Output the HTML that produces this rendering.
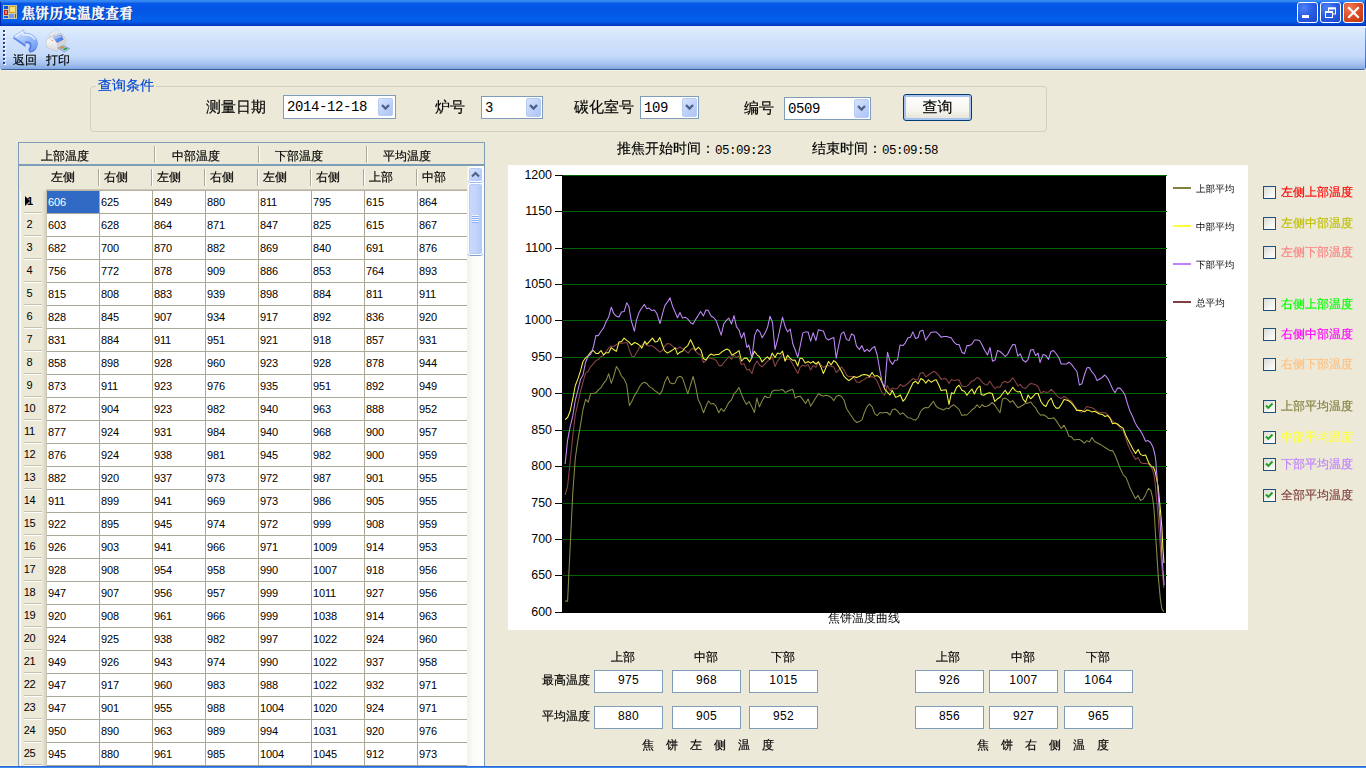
<!DOCTYPE html>
<html lang="zh-CN"><head><meta charset="utf-8"><title>焦饼历史温度查看</title>
<style>
*{box-sizing:border-box;margin:0;padding:0}
html,body{width:1366px;height:768px;overflow:hidden;background:#ece9d8}
body{position:relative;font:12px "Liberation Sans","WenQuanYi Zen Hei","Noto Sans CJK SC",sans-serif;color:#000}
.abs{position:absolute}
/* title bar */
#title{position:absolute;left:0;top:0;width:1366px;height:26px;
 background:linear-gradient(to bottom,#3a8bf5 0,#2f7ff0 2px,#0a5be6 3px,#0358e9 5px,#0455e4 9px,#0358e6 14px,#0560ee 19px,#0458e8 22px,#0347d2 24px,#0034b5 26px)}
#title .edge{position:absolute;left:0;top:2px;width:1px;height:24px;background:#0028a8}
#title .ttxt{position:absolute;left:21.5px;top:2px;height:18px;line-height:18px;color:#fff;white-space:nowrap;
 font:bold 13.5px "Liberation Serif","Noto Serif CJK SC",serif;text-shadow:1px 1px 0 #0a1f7a;letter-spacing:0.45px;-webkit-text-stroke:0.35px #fff}
.cap{position:absolute;top:2px;width:21px;height:21px;border:1px solid #fff;border-radius:3px;
 background:radial-gradient(circle at 30% 25%,#4f83f3 0,#2b5fe6 45%,#1a44c8 100%)}
.cap.close{background:radial-gradient(circle at 30% 25%,#ee7a55 0,#dd4c22 50%,#b8330f 100%)}
/* toolstrip */
#tool{position:absolute;left:0;top:26px;width:1366px;height:45px;background:#ece9d8}
#tool::after{content:"";position:absolute;left:3px;top:44px;width:1362px;height:1px;background:#f6f2e4}
#tool .bar{position:absolute;left:0;top:0;width:1366px;height:44px;border-radius:0 0 3px 3px;
 background:linear-gradient(to bottom,#e3eefd 0,#d4e5fc 10px,#c9defb 24px,#c4dafa 30px,#a9c6f0 37px,#86abe2 42.5px,#5e86c8 43px,#3b619c 43.2px,#3b619c 44px);}
#tool .grip{position:absolute;left:3px;top:4px;width:2px;height:36px;
 background:repeating-linear-gradient(to bottom,#27418a 0,#27418a 2px,transparent 2px,transparent 4px)}
#tool .grip2{position:absolute;left:4px;top:5px;width:2px;height:36px;
 background:repeating-linear-gradient(to bottom,#fff 0,#fff 2px,transparent 2px,transparent 4px)}
.tbtxt{position:absolute;top:27px;font-size:12px;line-height:14px;white-space:nowrap}
/* group box */
#gb{position:absolute;left:90px;top:86px;width:957px;height:46px;border:1px solid #d0d0bf;border-radius:4px}
#gbt{position:absolute;left:96px;top:76px;padding:0 2px;background:#ece9d8;color:#0046d5;font-size:14px;line-height:18px;white-space:nowrap}
.lbl15{position:absolute;font-size:15px;line-height:18px;white-space:nowrap}
.combo{position:absolute;height:23px;border:1px solid #7f9db9;background:#fff}
.combo span{position:absolute;left:3px;top:3px;font:14px/17px "Liberation Mono",monospace;letter-spacing:-0.4px;white-space:nowrap}
.combo .dd{position:absolute;right:1px;top:1px;width:15px;height:19px;border:1px solid #b7cbf5;border-radius:2px;
 background:linear-gradient(135deg,#d6e3fc 0,#c1d3fb 50%,#aec4f7 100%)}
.combo .dd svg{position:absolute;left:2px;top:5px}
.combo.dp{height:24px}
.combo.dp .dd{right:2px;top:2px;height:18px}
#qbtn{position:absolute;left:903px;top:94px;width:69px;height:27px;border:1px solid #003c74;border-radius:3px;
 background:linear-gradient(to bottom,#fff 0,#f6f5ef 60%,#e4e2d5 100%);box-shadow:inset 0 0 0 2px #a9c3ef}
#qbtn span{position:absolute;left:0;width:100%;top:3px;text-align:center;font-size:15px;line-height:18px}
.tm{position:absolute;top:140px;font-size:14px;line-height:16px;white-space:nowrap}
.tm b{font:12.5px "Liberation Mono",monospace;letter-spacing:-0.5px;position:relative;top:0.5px}
/* grid */
#grid{position:absolute;left:18px;top:142px;width:467px;height:626px;border:1px solid #7f9db9;border-bottom:0;overflow:hidden;background:#ece9d8}
.gh1{position:absolute;top:0;height:21px}
.gh1 span{position:absolute;top:6px;font-size:12px;line-height:14px;white-space:nowrap}
.gh1:not(.last)::after{content:"";position:absolute;right:-1px;top:3px;width:1px;height:17px;background:#aca899;box-shadow:1px 0 0 #fff}
.gsep{position:absolute;left:0;top:21px;width:465px;height:2px;background:#7f9db9}
.gh2row{position:absolute;left:0;top:23px;width:449px;height:25px}
.gh2row::after{content:"";position:absolute;left:27px;top:23px;width:421px;height:2px;background:linear-gradient(to bottom,#d5d1c1,#aca899)}
.gh2{position:absolute;top:0;height:23px}
.gh2 span{position:absolute;left:4px;top:4px;font-size:12px;line-height:14px;white-space:nowrap}
.gh2:not(:first-child):not(:last-child)::after{content:"";position:absolute;right:1px;top:3px;width:1px;height:17px;background:#aca899;box-shadow:1px 0 0 #fff}
.gbody{position:absolute;left:0;top:48px;width:448px;height:580px;background:#fff;overflow:hidden}
.gr{position:absolute;left:0;width:449px;height:23px}
.rh{position:absolute;left:0;top:0;width:28px;height:23px;background:linear-gradient(to right,#ece9d8 0,#ece9d8 1px,#fff 1px,#fff 2px,#ece9d8 2px,#ece9d8 23px,#d6d2c2 27px,#bdb9a9 28px);font-size:11px;line-height:22px;padding-left:0;width:28px;letter-spacing:-0.3px}
.rh b{position:absolute;left:0;top:-1px;width:21px;text-align:center;font-weight:normal}
.rh::after{content:"";position:absolute;left:5px;top:22px;width:18px;height:1px;background:#fff;box-shadow:0 -1px 0 #c5c2b2}
.c{position:absolute;top:0;width:53px;height:23px;border-right:1px solid #aca899;border-bottom:1px solid #aca899;font-size:11px;line-height:23px;padding-left:1px;letter-spacing:-0.15px;white-space:nowrap;overflow:hidden}
.c.sel{background:#316ac5;color:#fff}
.cur{position:absolute;left:6px;top:5px;width:0;height:0;border-left:5px solid #000;border-top:5px solid transparent;border-bottom:5px solid transparent}
.cur1{position:absolute;left:8px;top:-1px;font-size:11px;line-height:22px;font-style:normal;font-weight:bold}
/* chart */
#chart{position:absolute;left:508px;top:165px;width:740px;height:465px;background:#fff}
/* checkboxes */
.cb{position:absolute;left:1263px;width:13px;height:13px;border:1px solid #1c5180;background:linear-gradient(135deg,#dcdcd7 0,#f3f3ef 60%,#fff 100%)}
.cb svg{position:absolute;left:1px;top:1px}
.cbl{position:absolute;left:1281px;font-size:12px;line-height:14px;white-space:nowrap}
/* bottom */
.l12{position:absolute;font-size:12px;line-height:14px;white-space:nowrap}
.tb{position:absolute;width:69px;height:23px;border:1px solid #7f9db9;background:#fff;text-align:center;font-size:12px;line-height:19px;letter-spacing:0.4px}
#botline{position:absolute;left:0;top:766px;width:1366px;height:2px;background:linear-gradient(to bottom,#2a62c4 0,#2e6fd8 1px,#3c8df0 1px,#3c8df0 2px)}
#botcream{position:absolute;left:0;top:765px;width:1366px;height:1px;background:#f6f2de}

.gh1 span,.gh2 span,.lbl15,#gbt,.cbl,.l12,.tbtxt,.tm,#qbtn span{-webkit-text-stroke:0.16px currentColor}
.tm b{-webkit-text-stroke:0}
#tool .redge{position:absolute;left:1365px;top:2px;width:1px;height:40px;background:linear-gradient(to bottom,#7fa6ea,#3f69b8)}
#title .redge{position:absolute;left:1365px;top:0;width:1px;height:26px;background:#0030a8}

</style></head><body>

<div id="botcream"></div>
<div id="title">
 <div class="edge"></div><div class="redge"></div>
 <svg class="abs" style="left:3px;top:5px" width="15" height="15" viewBox="0 0 15 15">
  <rect x="0.5" y="0.5" width="13" height="13" fill="#0f5ae0" stroke="#cfc6a6"/>
  <path d="M5.5 1v12M1 4.5h4.5M1 10.5h4.5M5.5 8.5h8M11.5 8.5v5" stroke="#cfc6a6" stroke-width="1" fill="none"/>
  <rect x="1" y="1" width="4" height="3" fill="#0c50d8"/>
  <rect x="1" y="5" width="4" height="5" fill="#c8210f"/><rect x="2" y="6" width="2" height="3" fill="#f08a7a"/>
  <rect x="6" y="1" width="7" height="7" fill="#d9a21b"/><rect x="7" y="2" width="5" height="5" fill="#ffe27a"/>
  <rect x="6" y="9" width="5" height="4" fill="#6f9cf0"/>
  <rect x="1" y="11" width="2" height="2" fill="#1a5ae8"/><rect x="4" y="11" width="1" height="2" fill="#1a5ae8"/><rect x="12" y="9" width="1" height="4" fill="#1a5ae8"/>
 </svg>
 <div class="ttxt">焦饼历史温度查看</div>
 <div class="cap" style="left:1297px"><svg width="19" height="19"><rect x="4" y="12" width="7" height="3" fill="#fff"/></svg></div>
 <div class="cap" style="left:1320px"><svg width="19" height="19" fill="none" stroke="#fff"><rect x="7.5" y="5" width="7" height="6" stroke-width="1"/><path d="M7.5 5.5h7" stroke-width="2"/><rect x="4.5" y="8.5" width="7" height="6" fill="#2b5fe6"/><path d="M4.5 9h7" stroke-width="2"/></svg></div>
 <div class="cap close" style="left:1343px"><svg width="19" height="19" stroke="#fff" stroke-width="2.2" stroke-linecap="square"><path d="M5 5l9 9M14 5l-9 9"/></svg></div>
</div>
<div id="tool">
 <div class="bar"></div><div class="redge"></div>
 <div class="grip2"></div><div class="grip"></div>
 <svg class="abs" style="left:12px;top:3px" width="28" height="25" viewBox="0 0 28 25">
  <defs>
   <linearGradient id="ug1" x1="0" y1="0" x2="0.9" y2="1"><stop offset="0" stop-color="#dbe9ff"/><stop offset="0.45" stop-color="#a9c6fb"/><stop offset="1" stop-color="#6b98f4"/></linearGradient>
   <linearGradient id="ug2" x1="0" y1="0" x2="0" y2="1"><stop offset="0" stop-color="#6a96f3"/><stop offset="1" stop-color="#3a66e2"/></linearGradient>
  </defs>
  <path d="M1.2 9.2 L11.6 2.8 L12.3 5.6 C17.5 5.4 22 7.4 24.4 11.4 C26.3 15 25 20 21.5 22.2 C20.3 23 18.8 23.4 17.6 23.2 L16.6 20.6 C18 18.6 18.6 16.4 17.4 15 C16.4 14 14.8 13.8 13.2 14 L13.2 17.6 Z" fill="url(#ug2)" stroke="#5d84e6" stroke-width="0.5"/>
  <path d="M1.2 7.5 L11.6 1 L12.3 4.2 C17.5 4 22 6 24.4 10 C26.3 13.6 25 18.6 21.5 20.8 C20.3 21.6 18.8 22 17.6 21.8 C19.6 19.4 20.6 15.4 18.4 13.2 C17 12 15 12 13.2 12.3 L13.2 15.6 Z" fill="url(#ug1)" stroke="#7fa3f2" stroke-width="0.6"/>
  <path d="M3.4 7.6 L10.6 3 L11.2 5.8 C16.4 5.2 21 7 23 10.6" fill="none" stroke="#f2f7ff" stroke-width="1.5" opacity="0.85"/>
 </svg>
 <svg class="abs" style="left:45px;top:2px" width="28" height="26" viewBox="0 0 28 26">
  <defs>
   <linearGradient id="pb" x1="0" y1="0" x2="1" y2="1"><stop offset="0" stop-color="#a9c4f6"/><stop offset="0.5" stop-color="#5f8ce8"/><stop offset="1" stop-color="#3c6ad8"/></linearGradient>
   <linearGradient id="pf" x1="0" y1="0" x2="0" y2="1"><stop offset="0" stop-color="#fafafa"/><stop offset="1" stop-color="#d9d9d9"/></linearGradient>
  </defs>
  <path d="M4.2 6 L11.3 1.4 L13 2.2 L12.9 8.6 L5.2 12 Z" fill="#edf2fb" stroke="#c3cbdb" stroke-width="0.7"/>
  <path d="M5.4 6.4 L11.4 2.6 L11.6 8 L6 10.6 Z" fill="#dfe8f8"/>
  <path d="M1.1 14.6 L2.5 10.3 L7.7 7.7 L16.8 5.4 L20.6 11.2 L20.8 17 L11.7 23.2 L1.9 19.2 Z" fill="#e9e9e9" stroke="#b9b9b9" stroke-width="0.7"/>
  <path d="M2.5 11 L11.9 15 L11.7 23 L2 19 L1.4 14.6 Z" fill="url(#pf)"/>
  <path d="M12 15 L20.5 11.3 L20.6 17 L11.8 23 Z" fill="#d4d4d4"/>
  <path d="M7.7 8.9 L16.3 6.6 L18.8 11.5 L12 14.9 Z" fill="url(#pb)"/>
  <path d="M8.8 9.3 L15.8 7.4 L16.6 9 L9.8 11.2 Z" fill="#b4ccf8" opacity="0.8"/>
  <path d="M12.8 20 L18 17.6 L24.6 20.6 L19.4 23.8 Z" fill="#a9c3ef" stroke="#7f97c6" stroke-width="0.7"/>
  <path d="M14.6 19.8 L17.8 18.4 L19.8 19.3 L16.6 20.9 Z" fill="#e38a1a"/>
  <path d="M17.6 21.2 L21 19.6 L22.8 20.4 L19.6 22.3 Z" fill="#27a837"/>
  <circle cx="7.2" cy="12.6" r="0.5" fill="#e05555"/>
 </svg>
 <div class="tbtxt" style="left:13px">返回</div>
 <div class="tbtxt" style="left:46px">打印</div>
</div>
<div id="gb"></div><div id="gbt">查询条件</div>
<div class="lbl15" style="left:206px;top:98px">测量日期</div>
<div class="combo dp" style="left:283px;top:95px;width:113px"><span>2014-12-18</span><div class="dd"><svg width="9" height="7" viewBox="0 0 9 7"><path d="M1 1l3.5 3.5l3.5-3.5" fill="none" stroke="#4d6185" stroke-width="2.3"/></svg></div></div>
<div class="lbl15" style="left:435px;top:98px">炉号</div>
<div class="combo" style="left:481px;top:96px;width:62px"><span>3</span><div class="dd"><svg width="9" height="7" viewBox="0 0 9 7"><path d="M1 1l3.5 3.5l3.5-3.5" fill="none" stroke="#4d6185" stroke-width="2.3"/></svg></div></div>
<div class="lbl15" style="left:574px;top:98px">碳化室号</div>
<div class="combo" style="left:640px;top:96px;width:59px"><span>109</span><div class="dd"><svg width="9" height="7" viewBox="0 0 9 7"><path d="M1 1l3.5 3.5l3.5-3.5" fill="none" stroke="#4d6185" stroke-width="2.3"/></svg></div></div>
<div class="lbl15" style="left:744px;top:99px">编号</div>
<div class="combo" style="left:784px;top:97px;width:87px"><span>0509</span><div class="dd"><svg width="9" height="7" viewBox="0 0 9 7"><path d="M1 1l3.5 3.5l3.5-3.5" fill="none" stroke="#4d6185" stroke-width="2.3"/></svg></div></div>
<div id="qbtn"><span>查询</span></div>
<div class="tm" style="left:617px">推焦开始时间：<b>05:09:23</b></div>
<div class="tm" style="left:812px">结束时间：<b>05:09:58</b></div>

<div id="grid">
<div class="gh1" style="left:1px;width:134px"><span style="left:21px">上部温度</span></div>
<div class="gh1" style="left:136px;width:103px"><span style="left:17px">中部温度</span></div>
<div class="gh1" style="left:240px;width:107px"><span style="left:16px">下部温度</span></div>
<div class="gh1 last" style="left:348px;width:117px"><span style="left:16px">平均温度</span></div>
<div class="gsep"></div>
<div class="gh2row">
<div class="gh2" style="left:0;width:27px"></div>
<div class="gh2" style="left:28px;width:53px"><span>左侧</span></div>
<div class="gh2" style="left:81px;width:53px"><span>右侧</span></div>
<div class="gh2" style="left:134px;width:53px"><span>左侧</span></div>
<div class="gh2" style="left:187px;width:53px"><span>右侧</span></div>
<div class="gh2" style="left:240px;width:53px"><span>左侧</span></div>
<div class="gh2" style="left:293px;width:53px"><span>右侧</span></div>
<div class="gh2" style="left:346px;width:53px"><span>上部</span></div>
<div class="gh2" style="left:399px;width:50px"><span>中部</span></div>
</div>
<div class="gbody">
<div class="gr" style="top:0px">
<div class="rh"><i class="cur"></i><i class="cur1">1</i></div>
<div class="c sel" style="left:28px">606</div>
<div class="c" style="left:81px">625</div>
<div class="c" style="left:134px">849</div>
<div class="c" style="left:187px">880</div>
<div class="c" style="left:240px">811</div>
<div class="c" style="left:293px">795</div>
<div class="c" style="left:346px">615</div>
<div class="c" style="left:399px">864</div>
</div>
<div class="gr" style="top:23px">
<div class="rh"><b>2</b></div>
<div class="c" style="left:28px">603</div>
<div class="c" style="left:81px">628</div>
<div class="c" style="left:134px">864</div>
<div class="c" style="left:187px">871</div>
<div class="c" style="left:240px">847</div>
<div class="c" style="left:293px">825</div>
<div class="c" style="left:346px">615</div>
<div class="c" style="left:399px">867</div>
</div>
<div class="gr" style="top:46px">
<div class="rh"><b>3</b></div>
<div class="c" style="left:28px">682</div>
<div class="c" style="left:81px">700</div>
<div class="c" style="left:134px">870</div>
<div class="c" style="left:187px">882</div>
<div class="c" style="left:240px">869</div>
<div class="c" style="left:293px">840</div>
<div class="c" style="left:346px">691</div>
<div class="c" style="left:399px">876</div>
</div>
<div class="gr" style="top:69px">
<div class="rh"><b>4</b></div>
<div class="c" style="left:28px">756</div>
<div class="c" style="left:81px">772</div>
<div class="c" style="left:134px">878</div>
<div class="c" style="left:187px">909</div>
<div class="c" style="left:240px">886</div>
<div class="c" style="left:293px">853</div>
<div class="c" style="left:346px">764</div>
<div class="c" style="left:399px">893</div>
</div>
<div class="gr" style="top:92px">
<div class="rh"><b>5</b></div>
<div class="c" style="left:28px">815</div>
<div class="c" style="left:81px">808</div>
<div class="c" style="left:134px">883</div>
<div class="c" style="left:187px">939</div>
<div class="c" style="left:240px">898</div>
<div class="c" style="left:293px">884</div>
<div class="c" style="left:346px">811</div>
<div class="c" style="left:399px">911</div>
</div>
<div class="gr" style="top:115px">
<div class="rh"><b>6</b></div>
<div class="c" style="left:28px">828</div>
<div class="c" style="left:81px">845</div>
<div class="c" style="left:134px">907</div>
<div class="c" style="left:187px">934</div>
<div class="c" style="left:240px">917</div>
<div class="c" style="left:293px">892</div>
<div class="c" style="left:346px">836</div>
<div class="c" style="left:399px">920</div>
</div>
<div class="gr" style="top:138px">
<div class="rh"><b>7</b></div>
<div class="c" style="left:28px">831</div>
<div class="c" style="left:81px">884</div>
<div class="c" style="left:134px">911</div>
<div class="c" style="left:187px">951</div>
<div class="c" style="left:240px">921</div>
<div class="c" style="left:293px">918</div>
<div class="c" style="left:346px">857</div>
<div class="c" style="left:399px">931</div>
</div>
<div class="gr" style="top:161px">
<div class="rh"><b>8</b></div>
<div class="c" style="left:28px">858</div>
<div class="c" style="left:81px">898</div>
<div class="c" style="left:134px">928</div>
<div class="c" style="left:187px">960</div>
<div class="c" style="left:240px">923</div>
<div class="c" style="left:293px">928</div>
<div class="c" style="left:346px">878</div>
<div class="c" style="left:399px">944</div>
</div>
<div class="gr" style="top:184px">
<div class="rh"><b>9</b></div>
<div class="c" style="left:28px">873</div>
<div class="c" style="left:81px">911</div>
<div class="c" style="left:134px">923</div>
<div class="c" style="left:187px">976</div>
<div class="c" style="left:240px">935</div>
<div class="c" style="left:293px">951</div>
<div class="c" style="left:346px">892</div>
<div class="c" style="left:399px">949</div>
</div>
<div class="gr" style="top:207px">
<div class="rh"><b>10</b></div>
<div class="c" style="left:28px">872</div>
<div class="c" style="left:81px">904</div>
<div class="c" style="left:134px">923</div>
<div class="c" style="left:187px">982</div>
<div class="c" style="left:240px">940</div>
<div class="c" style="left:293px">963</div>
<div class="c" style="left:346px">888</div>
<div class="c" style="left:399px">952</div>
</div>
<div class="gr" style="top:230px">
<div class="rh"><b>11</b></div>
<div class="c" style="left:28px">877</div>
<div class="c" style="left:81px">924</div>
<div class="c" style="left:134px">931</div>
<div class="c" style="left:187px">984</div>
<div class="c" style="left:240px">940</div>
<div class="c" style="left:293px">968</div>
<div class="c" style="left:346px">900</div>
<div class="c" style="left:399px">957</div>
</div>
<div class="gr" style="top:253px">
<div class="rh"><b>12</b></div>
<div class="c" style="left:28px">876</div>
<div class="c" style="left:81px">924</div>
<div class="c" style="left:134px">938</div>
<div class="c" style="left:187px">981</div>
<div class="c" style="left:240px">945</div>
<div class="c" style="left:293px">982</div>
<div class="c" style="left:346px">900</div>
<div class="c" style="left:399px">959</div>
</div>
<div class="gr" style="top:276px">
<div class="rh"><b>13</b></div>
<div class="c" style="left:28px">882</div>
<div class="c" style="left:81px">920</div>
<div class="c" style="left:134px">937</div>
<div class="c" style="left:187px">973</div>
<div class="c" style="left:240px">972</div>
<div class="c" style="left:293px">987</div>
<div class="c" style="left:346px">901</div>
<div class="c" style="left:399px">955</div>
</div>
<div class="gr" style="top:299px">
<div class="rh"><b>14</b></div>
<div class="c" style="left:28px">911</div>
<div class="c" style="left:81px">899</div>
<div class="c" style="left:134px">941</div>
<div class="c" style="left:187px">969</div>
<div class="c" style="left:240px">973</div>
<div class="c" style="left:293px">986</div>
<div class="c" style="left:346px">905</div>
<div class="c" style="left:399px">955</div>
</div>
<div class="gr" style="top:322px">
<div class="rh"><b>15</b></div>
<div class="c" style="left:28px">922</div>
<div class="c" style="left:81px">895</div>
<div class="c" style="left:134px">945</div>
<div class="c" style="left:187px">974</div>
<div class="c" style="left:240px">972</div>
<div class="c" style="left:293px">999</div>
<div class="c" style="left:346px">908</div>
<div class="c" style="left:399px">959</div>
</div>
<div class="gr" style="top:345px">
<div class="rh"><b>16</b></div>
<div class="c" style="left:28px">926</div>
<div class="c" style="left:81px">903</div>
<div class="c" style="left:134px">941</div>
<div class="c" style="left:187px">966</div>
<div class="c" style="left:240px">971</div>
<div class="c" style="left:293px">1009</div>
<div class="c" style="left:346px">914</div>
<div class="c" style="left:399px">953</div>
</div>
<div class="gr" style="top:368px">
<div class="rh"><b>17</b></div>
<div class="c" style="left:28px">928</div>
<div class="c" style="left:81px">908</div>
<div class="c" style="left:134px">954</div>
<div class="c" style="left:187px">958</div>
<div class="c" style="left:240px">990</div>
<div class="c" style="left:293px">1007</div>
<div class="c" style="left:346px">918</div>
<div class="c" style="left:399px">956</div>
</div>
<div class="gr" style="top:391px">
<div class="rh"><b>18</b></div>
<div class="c" style="left:28px">947</div>
<div class="c" style="left:81px">907</div>
<div class="c" style="left:134px">956</div>
<div class="c" style="left:187px">957</div>
<div class="c" style="left:240px">999</div>
<div class="c" style="left:293px">1011</div>
<div class="c" style="left:346px">927</div>
<div class="c" style="left:399px">956</div>
</div>
<div class="gr" style="top:414px">
<div class="rh"><b>19</b></div>
<div class="c" style="left:28px">920</div>
<div class="c" style="left:81px">908</div>
<div class="c" style="left:134px">961</div>
<div class="c" style="left:187px">966</div>
<div class="c" style="left:240px">999</div>
<div class="c" style="left:293px">1038</div>
<div class="c" style="left:346px">914</div>
<div class="c" style="left:399px">963</div>
</div>
<div class="gr" style="top:437px">
<div class="rh"><b>20</b></div>
<div class="c" style="left:28px">924</div>
<div class="c" style="left:81px">925</div>
<div class="c" style="left:134px">938</div>
<div class="c" style="left:187px">982</div>
<div class="c" style="left:240px">997</div>
<div class="c" style="left:293px">1022</div>
<div class="c" style="left:346px">924</div>
<div class="c" style="left:399px">960</div>
</div>
<div class="gr" style="top:460px">
<div class="rh"><b>21</b></div>
<div class="c" style="left:28px">949</div>
<div class="c" style="left:81px">926</div>
<div class="c" style="left:134px">943</div>
<div class="c" style="left:187px">974</div>
<div class="c" style="left:240px">990</div>
<div class="c" style="left:293px">1022</div>
<div class="c" style="left:346px">937</div>
<div class="c" style="left:399px">958</div>
</div>
<div class="gr" style="top:483px">
<div class="rh"><b>22</b></div>
<div class="c" style="left:28px">947</div>
<div class="c" style="left:81px">917</div>
<div class="c" style="left:134px">960</div>
<div class="c" style="left:187px">983</div>
<div class="c" style="left:240px">988</div>
<div class="c" style="left:293px">1022</div>
<div class="c" style="left:346px">932</div>
<div class="c" style="left:399px">971</div>
</div>
<div class="gr" style="top:506px">
<div class="rh"><b>23</b></div>
<div class="c" style="left:28px">947</div>
<div class="c" style="left:81px">901</div>
<div class="c" style="left:134px">955</div>
<div class="c" style="left:187px">988</div>
<div class="c" style="left:240px">1004</div>
<div class="c" style="left:293px">1020</div>
<div class="c" style="left:346px">924</div>
<div class="c" style="left:399px">971</div>
</div>
<div class="gr" style="top:529px">
<div class="rh"><b>24</b></div>
<div class="c" style="left:28px">950</div>
<div class="c" style="left:81px">890</div>
<div class="c" style="left:134px">963</div>
<div class="c" style="left:187px">989</div>
<div class="c" style="left:240px">994</div>
<div class="c" style="left:293px">1031</div>
<div class="c" style="left:346px">920</div>
<div class="c" style="left:399px">976</div>
</div>
<div class="gr" style="top:552px">
<div class="rh"><b>25</b></div>
<div class="c" style="left:28px">945</div>
<div class="c" style="left:81px">880</div>
<div class="c" style="left:134px">961</div>
<div class="c" style="left:187px">985</div>
<div class="c" style="left:240px">1004</div>
<div class="c" style="left:293px">1045</div>
<div class="c" style="left:346px">912</div>
<div class="c" style="left:399px">973</div>
</div>
</div>
<div id="sb" style="position:absolute;left:448px;top:23px;width:17px;height:605px;background:linear-gradient(to right,#f1f0e8 0,#fbfbf8 40%,#fefefb 100%)">
 <div style="position:absolute;left:1px;top:1px;width:15px;height:15px;border:1px solid #fff;border-radius:3px;background:linear-gradient(135deg,#dbe6fd 0,#c3d5fc 50%,#aec4f8 100%);box-shadow:inset 0 0 0 1px #b7cbf5,0 1px 0 #9db8ee">
  <svg width="13" height="13" style="position:absolute;left:0;top:0"><path d="M3 8.5l3.5-3.5l3.5 3.5" fill="none" stroke="#4d6185" stroke-width="2"/></svg></div>
 <div style="position:absolute;left:1px;top:17px;width:15px;height:72px;border:1px solid #fff;border-radius:3px;background:linear-gradient(to right,#c9d9fc 0,#c4d5fd 50%,#b3c8f8 100%);box-shadow:inset 0 0 0 1px #b7cbf5,0 1px 0 #7d9de2">
  <div style="position:absolute;left:3px;top:31px;width:7px;height:8px;background:repeating-linear-gradient(to bottom,#eef4fe 0,#eef4fe 1px,#8cb0f8 1px,#8cb0f8 2px)"></div>
 </div>
</div>

</div>
<svg id="chart" class="abs" style="left:508px;top:165px" width="740" height="465" viewBox="508 165 740 465" font-family='"Liberation Sans","WenQuanYi Zen Hei","Noto Sans CJK SC",sans-serif'>
<rect x="508" y="165" width="740" height="465" fill="#fff"/>
<rect x="562" y="175" width="604" height="438" fill="#000"/>
<line x1="555" x2="562" y1="612.5" y2="612.5" stroke="#000" stroke-width="1"/>
<text x="552" y="615.8" font-size="12.4" text-anchor="end" fill="#000">600</text>
<line x1="563" x2="1167" y1="575.5" y2="575.5" stroke="#006400" stroke-width="1"/>
<line x1="555" x2="562" y1="575.5" y2="575.5" stroke="#000" stroke-width="1"/>
<text x="552" y="578.8" font-size="12.4" text-anchor="end" fill="#000">650</text>
<line x1="563" x2="1167" y1="539.5" y2="539.5" stroke="#006400" stroke-width="1"/>
<line x1="555" x2="562" y1="539.5" y2="539.5" stroke="#000" stroke-width="1"/>
<text x="552" y="542.8" font-size="12.4" text-anchor="end" fill="#000">700</text>
<line x1="563" x2="1167" y1="503.5" y2="503.5" stroke="#006400" stroke-width="1"/>
<line x1="555" x2="562" y1="503.5" y2="503.5" stroke="#000" stroke-width="1"/>
<text x="552" y="506.8" font-size="12.4" text-anchor="end" fill="#000">750</text>
<line x1="563" x2="1167" y1="466.5" y2="466.5" stroke="#006400" stroke-width="1"/>
<line x1="555" x2="562" y1="466.5" y2="466.5" stroke="#000" stroke-width="1"/>
<text x="552" y="469.8" font-size="12.4" text-anchor="end" fill="#000">800</text>
<line x1="563" x2="1167" y1="430.5" y2="430.5" stroke="#006400" stroke-width="1"/>
<line x1="555" x2="562" y1="430.5" y2="430.5" stroke="#000" stroke-width="1"/>
<text x="552" y="433.8" font-size="12.4" text-anchor="end" fill="#000">850</text>
<line x1="563" x2="1167" y1="393.5" y2="393.5" stroke="#006400" stroke-width="1"/>
<line x1="555" x2="562" y1="393.5" y2="393.5" stroke="#000" stroke-width="1"/>
<text x="552" y="396.8" font-size="12.4" text-anchor="end" fill="#000">900</text>
<line x1="563" x2="1167" y1="357.5" y2="357.5" stroke="#006400" stroke-width="1"/>
<line x1="555" x2="562" y1="357.5" y2="357.5" stroke="#000" stroke-width="1"/>
<text x="552" y="360.8" font-size="12.4" text-anchor="end" fill="#000">950</text>
<line x1="563" x2="1167" y1="320.5" y2="320.5" stroke="#006400" stroke-width="1"/>
<line x1="555" x2="562" y1="320.5" y2="320.5" stroke="#000" stroke-width="1"/>
<text x="552" y="323.8" font-size="12.4" text-anchor="end" fill="#000">1000</text>
<line x1="563" x2="1167" y1="284.5" y2="284.5" stroke="#006400" stroke-width="1"/>
<line x1="555" x2="562" y1="284.5" y2="284.5" stroke="#000" stroke-width="1"/>
<text x="552" y="287.8" font-size="12.4" text-anchor="end" fill="#000">1050</text>
<line x1="563" x2="1167" y1="248.5" y2="248.5" stroke="#006400" stroke-width="1"/>
<line x1="555" x2="562" y1="248.5" y2="248.5" stroke="#000" stroke-width="1"/>
<text x="552" y="251.8" font-size="12.4" text-anchor="end" fill="#000">1100</text>
<line x1="563" x2="1167" y1="211.5" y2="211.5" stroke="#006400" stroke-width="1"/>
<line x1="555" x2="562" y1="211.5" y2="211.5" stroke="#000" stroke-width="1"/>
<text x="552" y="214.8" font-size="12.4" text-anchor="end" fill="#000">1150</text>
<line x1="563" x2="1167" y1="175.5" y2="175.5" stroke="#006400" stroke-width="1"/>
<line x1="555" x2="562" y1="175.5" y2="175.5" stroke="#000" stroke-width="1"/>
<text x="552" y="178.8" font-size="12.4" text-anchor="end" fill="#000">1200</text>
<g fill="none" stroke-width="1.05" stroke-linejoin="round">
<polyline stroke="#8a8a48" points="565.1,601.1 567.6,601.1 570.2,545.7 572.8,492.6 575.3,458.3 577.9,440.1 580.5,424.8 583.0,409.5 585.6,399.3 588.2,402.2 590.7,393.5 593.3,393.5 595.9,392.8 598.4,389.9 601.0,387.7 603.6,383.3 606.1,380.4 608.7,373.8 611.3,383.3 613.8,376.0 616.4,366.6 619.0,370.2 621.5,376.0 624.1,378.9 626.7,384.8 629.4,405.6 631.9,401.2 634.4,395.6 636.9,391.9 639.4,386.9 641.9,383.5 644.6,382.2 647.1,383.8 649.6,386.9 652.1,388.1 654.6,390.6 657.1,392.2 659.8,394.4 662.2,390.6 664.8,381.9 667.5,376.5 670.0,382.8 672.5,383.8 675.0,383.1 677.5,377.5 680.0,376.2 682.5,377.8 685.2,386.2 687.8,393.8 690.2,386.2 693.1,376.5 695.6,386.2 698.1,399.4 700.6,404.4 703.5,412.8 706.0,406.2 708.5,401.0 711.0,404.0 713.5,403.5 716.0,406.2 718.8,412.8 721.2,408.5 723.8,411.5 726.2,407.5 728.8,402.5 731.2,400.2 734.0,394.0 736.5,391.2 738.8,387.5 740.0,390.0 741.5,394.4 744.0,400.0 746.5,404.4 749.0,401.5 751.9,406.9 754.4,412.5 756.9,398.1 759.4,406.9 761.9,401.2 764.8,396.0 767.2,397.5 769.8,397.2 772.2,391.2 775.0,390.2 777.5,390.2 780.0,390.0 782.5,389.4 785.2,392.5 787.8,391.2 790.2,390.0 792.8,389.4 795.2,398.1 797.8,396.5 800.2,396.2 802.8,399.4 805.6,403.5 808.1,399.0 810.6,406.2 813.1,402.2 815.6,398.1 818.5,393.8 821.0,395.2 823.5,396.0 826.2,395.2 828.8,396.0 831.2,397.2 833.8,400.6 836.2,396.5 838.8,395.2 841.5,396.5 844.0,400.0 846.5,408.5 849.0,412.5 851.5,416.2 854.0,419.8 856.9,422.5 859.4,421.5 860.0,421.2 861.9,419.8 864.4,412.5 866.9,406.9 869.4,404.0 872.2,406.9 874.8,413.8 877.2,415.6 879.8,412.5 882.2,413.1 884.8,412.5 887.2,412.5 890.0,415.0 892.5,409.4 895.0,409.0 897.5,411.2 900.2,414.4 902.8,412.8 905.2,415.2 908.1,417.8 910.6,418.1 913.1,419.4 915.6,420.2 918.1,417.5 920.6,411.5 923.1,408.8 925.6,407.5 928.4,407.8 930.9,404.4 933.4,401.2 935.9,406.0 938.5,408.1 941.0,409.0 943.5,410.0 946.2,408.1 948.8,408.8 951.2,406.2 953.8,404.8 956.2,406.9 959.0,409.4 961.9,415.6 964.4,414.8 966.9,415.0 969.4,412.5 971.9,409.8 974.4,408.1 977.1,404.8 979.4,407.5 980.0,407.5 981.9,404.8 984.4,406.5 986.9,406.2 989.4,405.0 992.2,402.5 994.8,405.0 997.2,408.8 1000.0,412.8 1002.5,399.0 1005.0,398.1 1007.5,399.4 1010.0,402.2 1012.8,400.6 1015.2,404.4 1018.1,407.8 1020.6,406.5 1023.1,405.0 1025.6,403.1 1028.1,403.1 1030.6,401.9 1033.1,405.0 1035.6,407.8 1038.1,412.5 1040.6,415.2 1043.4,414.8 1045.9,416.2 1048.5,418.5 1051.2,418.5 1053.8,417.8 1056.2,420.6 1058.8,424.8 1061.2,428.5 1064.0,425.2 1066.5,430.0 1069.0,436.2 1071.5,436.9 1074.0,440.0 1076.9,439.4 1079.4,439.4 1081.9,441.0 1084.4,443.1 1086.9,440.6 1089.4,441.9 1091.9,437.5 1094.4,441.2 1096.9,442.8 1099.4,444.0 1102.2,445.6 1105.0,447.5 1107.5,449.0 1110.0,450.6 1112.5,450.6 1115.0,455.0 1117.5,461.2 1120.0,468.1 1122.5,473.1 1123.3,475.1 1125.9,477.2 1128.0,482.4 1130.1,488.1 1132.7,493.3 1135.5,498.8 1138.1,495.4 1140.5,500.4 1143.1,499.1 1145.7,494.4 1148.5,488.3 1150.9,490.7 1152.5,497.5 1153.8,506.9 1154.6,518.3 1155.4,532.9 1156.7,551.6 1158.2,575.6 1160.3,598.5 1161.9,608.9 1163.8,611.7"/>
<polyline stroke="#8a4545" points="565.1,495.0 567.6,486.2 570.2,461.1 572.8,435.6 575.3,414.6 577.9,403.1 580.5,391.7 583.0,382.0 585.6,373.1 588.2,371.3 590.7,366.6 593.3,363.8 595.9,360.6 598.4,359.6 601.0,356.5 603.6,355.4 606.1,351.6 608.7,347.9 611.3,346.0 613.8,346.5 616.4,344.7 619.0,343.0 621.5,343.2 624.1,342.9 626.7,342.6 627.5,343.8 629.4,350.0 631.9,356.2 634.4,356.5 636.9,351.9 639.4,347.5 641.9,345.0 644.4,342.5 646.2,345.0 649.0,346.0 651.9,345.6 655.0,347.8 657.5,350.0 660.0,352.2 662.5,350.0 665.0,345.6 667.5,343.5 670.0,344.0 672.5,346.2 675.0,348.1 677.5,348.8 680.0,346.9 682.5,348.8 685.2,350.6 688.1,353.1 690.6,349.8 693.1,348.1 695.6,351.2 698.4,353.8 700.9,355.2 703.4,362.5 705.9,360.6 708.5,357.5 711.0,358.5 713.8,359.0 716.2,360.6 719.0,365.6 721.5,365.6 724.0,362.5 726.5,359.4 729.0,356.5 731.5,359.4 734.0,355.0 736.5,357.5 738.8,356.0 741.2,364.4 744.0,363.8 746.9,370.0 749.4,369.4 751.9,373.5 754.6,365.0 757.1,361.0 759.6,365.0 762.1,366.9 765.0,363.8 767.5,361.2 770.0,358.8 772.2,356.9 775.0,366.5 777.5,361.2 780.0,358.1 782.8,353.5 785.0,360.0 787.5,359.0 790.0,359.4 792.5,363.8 795.2,368.8 797.8,373.5 800.0,367.5 802.5,365.0 805.2,366.2 808.1,364.4 810.6,370.0 813.1,365.6 815.9,367.2 818.4,361.5 820.9,364.8 823.4,367.5 826.0,366.0 828.5,365.6 831.2,366.2 833.8,366.9 836.2,372.5 839.0,369.8 841.5,366.9 844.0,370.0 846.5,375.0 849.0,376.9 851.5,376.2 854.0,377.5 856.5,381.9 859.4,382.5 861.9,380.6 864.4,379.4 867.1,377.5 869.6,377.5 872.1,376.5 874.6,378.1 877.2,381.2 879.8,387.5 882.2,393.1 884.8,395.2 887.2,385.6 890.0,390.6 892.2,388.1 895.0,389.0 897.5,388.5 900.2,384.4 903.1,386.5 905.2,385.6 907.8,383.5 910.2,381.2 913.1,378.5 915.6,379.8 918.1,379.4 920.0,373.5 923.1,372.5 925.9,376.9 928.4,375.0 931.0,373.1 933.8,371.2 936.2,372.8 938.8,375.6 941.2,379.4 944.0,378.5 946.2,378.8 949.0,383.5 951.5,379.4 953.8,380.6 956.5,380.0 959.0,379.8 961.9,386.2 964.4,386.5 966.9,386.2 969.4,383.8 971.9,381.2 974.4,380.2 976.9,377.5 979.4,378.5 980.0,379.4 982.5,382.8 985.0,384.4 987.2,385.0 989.8,381.2 992.2,385.0 994.8,388.5 997.5,386.9 1000.0,387.2 1002.5,382.8 1005.0,381.2 1007.5,382.8 1010.0,381.2 1012.8,377.8 1015.2,381.2 1017.8,386.0 1020.2,384.4 1023.1,387.8 1025.6,388.5 1028.1,385.6 1030.6,383.5 1033.1,384.0 1035.6,384.8 1038.1,386.5 1040.9,393.1 1043.4,391.5 1045.9,392.2 1048.5,392.2 1051.2,389.4 1053.8,391.9 1056.2,394.8 1058.8,397.5 1061.2,398.5 1064.0,396.5 1066.5,397.8 1069.0,400.0 1071.5,401.2 1074.0,405.0 1076.9,408.8 1079.4,411.2 1081.9,412.2 1084.4,409.8 1086.9,406.5 1089.4,407.2 1091.9,407.8 1094.4,409.0 1096.9,411.5 1099.4,412.2 1099.8,412.8 1102.2,412.5 1105.0,412.8 1107.5,414.4 1110.0,417.5 1112.5,421.2 1115.0,423.1 1117.5,424.8 1120.0,427.5 1123.1,430.6 1125.6,437.5 1128.1,445.0 1130.6,450.6 1133.1,455.6 1135.6,459.4 1138.1,457.5 1140.6,462.5 1143.1,463.5 1145.6,463.5 1148.1,463.8 1149.9,465.2 1152.5,469.4 1154.1,475.6 1155.1,482.9 1156.1,494.4 1157.2,504.8 1158.2,518.3 1159.3,532.9 1160.8,554.8 1162.4,572.5 1163.8,587.6"/>
<polyline stroke="#f4f44a" points="565.1,419.7 567.6,417.5 570.2,411.0 572.8,398.6 575.3,385.5 577.9,378.9 580.5,370.9 583.0,361.5 585.6,357.8 588.2,355.6 590.7,352.0 593.3,350.5 595.9,353.4 598.4,353.4 601.0,350.5 603.6,354.9 606.1,352.7 608.7,352.7 611.3,347.6 613.8,349.8 616.4,351.3 619.0,341.8 621.5,341.8 624.1,338.1 626.7,340.3 628.8,341.9 631.5,345.0 634.6,342.5 637.5,343.8 640.0,345.6 641.9,348.1 644.8,341.2 646.9,344.4 649.8,341.2 652.5,338.1 655.0,341.9 657.5,341.5 659.8,337.5 661.9,343.8 664.4,350.6 667.5,353.1 670.6,351.2 673.5,349.4 675.2,347.8 677.5,354.4 680.0,352.2 682.5,351.2 685.0,347.8 687.8,345.6 690.6,339.8 693.1,345.0 695.6,350.2 698.4,347.2 700.9,350.0 703.4,358.5 705.9,360.0 708.5,356.2 711.0,354.0 713.8,355.2 716.2,354.4 719.0,354.4 721.9,351.9 724.4,350.2 726.9,349.0 729.4,350.2 731.9,355.2 734.4,353.8 736.9,352.2 739.0,350.6 741.5,361.0 744.4,358.1 746.9,358.1 749.6,361.9 751.9,357.5 754.4,351.2 757.1,354.8 759.6,356.9 762.1,361.9 765.0,358.8 767.5,356.9 769.8,359.4 772.2,353.1 775.0,357.5 777.5,353.1 780.0,354.0 782.5,351.2 785.0,361.2 787.5,355.2 790.0,358.1 792.5,360.2 795.0,360.0 797.8,366.0 800.0,358.1 802.5,358.5 805.2,363.1 808.1,361.5 810.6,363.1 813.1,361.5 815.9,364.0 818.4,361.9 820.9,366.9 823.4,373.5 826.0,367.5 828.5,361.5 831.2,364.8 833.8,360.6 836.2,362.5 839.0,366.9 841.5,371.2 844.0,376.2 846.5,378.8 849.0,380.6 851.5,378.8 854.0,376.5 856.5,377.5 859.4,376.5 861.9,375.0 864.4,374.4 867.1,375.0 869.6,376.5 872.1,372.5 874.6,376.2 877.2,375.6 879.8,377.5 882.2,382.8 884.8,389.4 887.2,391.9 890.0,395.0 892.2,390.2 895.6,397.2 898.1,396.5 900.2,394.8 903.1,401.2 905.2,398.8 907.8,393.8 910.2,388.8 913.1,382.8 915.6,381.2 918.1,383.8 920.9,378.5 923.4,380.0 925.9,383.1 928.4,379.8 931.2,382.2 933.8,380.6 936.2,379.8 938.8,385.0 941.2,390.6 943.8,390.0 946.2,389.8 949.0,404.4 951.5,392.8 953.8,393.8 956.5,387.5 959.0,385.2 961.9,390.2 964.4,391.2 966.9,395.2 969.4,391.9 971.9,389.0 974.4,394.0 976.9,388.8 979.4,386.0 980.0,386.2 981.2,394.4 983.8,395.2 986.2,393.8 989.4,392.8 992.2,393.5 994.8,401.5 997.5,398.8 1000.0,397.2 1002.5,393.8 1005.2,390.2 1007.8,394.4 1010.2,391.2 1012.8,387.2 1015.2,390.6 1017.8,391.9 1020.2,391.5 1023.1,399.4 1025.6,402.2 1028.1,395.0 1030.6,398.8 1033.1,396.5 1035.6,393.5 1038.1,393.5 1040.9,401.5 1043.4,405.0 1045.9,406.5 1048.5,401.0 1051.2,398.1 1053.8,405.0 1056.2,408.1 1058.8,408.1 1061.2,404.8 1064.0,399.4 1066.5,400.0 1069.0,401.0 1071.5,403.1 1074.0,406.2 1076.9,410.6 1079.4,410.2 1081.9,410.6 1084.4,411.9 1086.9,410.0 1089.4,410.6 1091.9,411.9 1094.4,411.2 1096.9,412.5 1099.4,414.0 1099.8,414.0 1102.2,414.4 1105.0,416.5 1107.5,415.6 1110.0,418.1 1112.5,423.8 1115.0,423.1 1117.5,424.0 1120.0,426.2 1123.1,428.1 1125.6,435.0 1128.1,440.0 1130.6,444.8 1133.1,449.4 1135.6,453.5 1138.1,449.4 1140.6,454.4 1143.1,455.6 1145.6,455.0 1148.1,461.2 1148.9,463.1 1151.5,466.5 1153.5,467.3 1155.1,471.5 1156.7,478.8 1158.2,487.1 1159.6,501.7 1160.8,514.2 1161.9,527.7 1162.9,548.5 1164.0,563.1"/>
<polyline stroke="#c08af8" points="565.1,464.1 567.6,440.1 570.2,426.6 572.8,415.7 575.3,400.1 577.9,390.2 580.5,379.3 583.0,374.9 585.6,362.2 588.2,356.0 590.7,354.2 593.3,347.3 595.9,335.6 598.4,335.6 601.0,331.2 603.6,327.9 606.1,321.8 608.7,317.0 611.3,307.2 613.8,313.7 616.4,316.3 619.0,317.0 621.5,311.9 624.1,311.6 626.7,302.8 628.8,306.2 631.2,320.6 634.4,331.2 636.5,320.0 638.8,313.1 641.2,308.8 644.4,304.4 646.9,308.8 649.0,308.1 651.9,310.6 654.4,310.0 656.9,313.8 660.0,323.5 662.5,313.8 664.8,305.6 667.5,301.9 670.0,297.8 672.5,306.2 675.0,311.9 677.5,317.8 680.0,312.5 682.5,318.1 685.2,317.2 688.1,319.4 690.6,322.8 693.1,324.0 695.6,319.4 698.1,315.6 700.6,311.5 703.4,316.0 705.9,310.0 708.1,310.2 711.0,316.0 713.5,317.5 716.2,320.6 718.8,328.1 721.2,335.2 723.8,323.8 726.2,320.6 728.8,318.1 731.5,324.0 734.0,315.6 736.5,326.9 739.0,330.0 741.5,338.1 744.0,332.5 746.9,347.5 748.8,345.0 751.9,358.1 754.6,335.6 757.2,329.4 759.8,331.9 762.2,337.8 765.0,333.1 767.5,327.5 770.0,316.2 772.5,322.5 775.0,349.4 777.5,340.0 780.0,328.8 782.5,317.2 785.0,326.2 787.5,331.9 790.2,329.0 792.8,343.8 795.2,350.0 797.8,357.5 800.0,346.9 802.8,333.1 805.2,331.9 808.1,331.9 810.6,341.2 813.1,332.8 815.9,340.6 818.4,329.8 820.9,330.6 823.4,331.0 826.0,338.1 828.5,340.0 831.2,338.5 833.8,337.5 836.2,358.1 838.8,345.0 841.2,333.8 843.8,331.9 846.5,339.4 849.0,340.6 851.5,334.0 854.0,335.2 856.5,346.2 859.4,349.4 861.9,345.6 864.4,351.5 867.1,349.4 869.6,351.5 872.1,348.1 874.6,346.5 877.2,355.0 879.8,370.0 882.2,382.5 884.8,386.9 887.5,352.2 889.8,360.6 892.5,364.4 895.0,360.2 897.5,360.0 900.0,345.0 902.8,345.6 905.2,343.1 907.8,338.1 910.4,337.2 912.9,331.9 915.6,338.5 918.1,337.5 920.0,331.2 922.8,330.2 925.6,340.2 928.1,336.5 930.9,332.5 933.5,331.9 936.0,331.9 938.8,334.4 941.2,337.2 943.8,336.5 946.5,336.5 949.0,337.2 951.2,337.8 954.0,342.2 956.5,344.4 959.0,344.4 961.9,352.2 964.4,353.8 966.9,345.6 969.4,345.6 971.9,344.0 974.6,340.0 977.1,340.0 979.6,340.6 982.1,345.0 984.8,350.6 987.5,355.0 990.0,347.5 992.5,361.2 995.0,360.0 997.5,350.6 1000.0,351.5 1002.8,353.8 1005.2,356.5 1007.8,353.8 1010.2,349.0 1012.8,344.4 1015.2,344.8 1017.8,356.2 1020.2,353.8 1022.8,360.0 1025.6,362.2 1028.1,359.4 1030.6,350.0 1033.1,349.4 1035.6,355.6 1038.1,353.1 1040.0,362.5 1043.1,354.4 1045.9,355.6 1048.5,359.4 1051.0,351.5 1053.5,350.6 1056.0,353.5 1058.8,357.5 1061.2,364.0 1063.8,364.0 1066.5,364.0 1069.0,362.2 1071.5,364.4 1074.0,367.8 1076.9,371.5 1079.4,385.0 1081.9,383.8 1084.4,375.0 1086.9,367.8 1089.4,367.5 1091.9,371.9 1094.6,375.0 1097.1,380.6 1099.6,379.0 1102.1,377.5 1104.8,375.0 1107.5,378.1 1110.0,383.1 1112.5,388.8 1115.0,392.8 1117.5,388.1 1120.0,388.1 1122.5,391.0 1125.0,395.0 1127.5,403.8 1130.0,411.2 1132.5,416.2 1135.0,422.5 1137.5,426.9 1140.0,430.0 1142.8,435.0 1145.6,441.2 1148.1,440.6 1150.6,442.5 1153.1,447.5 1155.0,455.0 1156.0,462.5 1156.1,466.2 1157.2,478.8 1158.2,494.4 1159.3,510.0 1160.3,524.6 1161.9,556.8 1163.4,575.6 1164.2,585.0"/>
</g>
<line x1="1173" x2="1191" y1="188" y2="188" stroke="#808040" stroke-width="2"/>
<text x="1196" y="192" font-size="9.6" fill="#000">上部平均</text>
<line x1="1173" x2="1191" y1="226" y2="226" stroke="#ffff40" stroke-width="2"/>
<text x="1196" y="230" font-size="9.6" fill="#000">中部平均</text>
<line x1="1173" x2="1191" y1="264" y2="264" stroke="#c080ff" stroke-width="2"/>
<text x="1196" y="268" font-size="9.6" fill="#000">下部平均</text>
<line x1="1173" x2="1191" y1="302" y2="302" stroke="#804040" stroke-width="2"/>
<text x="1196" y="306" font-size="9.6" fill="#000">总平均</text>
<text x="828" y="622" font-size="12" fill="#000">焦饼温度曲线</text>
<rect x="820" y="606" width="90" height="7" fill="#000"/>
</svg>
<div class="cb" style="top:186px"></div><div class="cbl" style="top:185px;color:#ff0000">左侧上部温度</div>
<div class="cb" style="top:217px"></div><div class="cbl" style="top:216px;color:#c0c000">左侧中部温度</div>
<div class="cb" style="top:246px"></div><div class="cbl" style="top:245px;color:#ff8080">左侧下部温度</div>
<div class="cb" style="top:298px"></div><div class="cbl" style="top:297px;color:#00ff00">右侧上部温度</div>
<div class="cb" style="top:328px"></div><div class="cbl" style="top:327px;color:#ff00ff">右侧中部温度</div>
<div class="cb" style="top:358px"></div><div class="cbl" style="top:357px;color:#ffc080">右侧下部温度</div>
<div class="cb" style="top:400px"><svg width="9" height="9" viewBox="0 0 9 9"><path d="M1 3.5l2.3 2.4l4.2-4.4" fill="none" stroke="#21a121" stroke-width="2"/></svg></div><div class="cbl" style="top:399px;color:#808040">上部平均温度</div>
<div class="cb" style="top:431px"><svg width="9" height="9" viewBox="0 0 9 9"><path d="M1 3.5l2.3 2.4l4.2-4.4" fill="none" stroke="#21a121" stroke-width="2"/></svg></div><div class="cbl" style="top:430px;color:#ffff40">中部平均温度</div>
<div class="cb" style="top:458px"><svg width="9" height="9" viewBox="0 0 9 9"><path d="M1 3.5l2.3 2.4l4.2-4.4" fill="none" stroke="#21a121" stroke-width="2"/></svg></div><div class="cbl" style="top:457px;color:#c080ff">下部平均温度</div>
<div class="cb" style="top:489px"><svg width="9" height="9" viewBox="0 0 9 9"><path d="M1 3.5l2.3 2.4l4.2-4.4" fill="none" stroke="#21a121" stroke-width="2"/></svg></div><div class="cbl" style="top:488px;color:#804040">全部平均温度</div>
<div class="l12" style="left:611px;top:650px">上部</div>
<div class="l12" style="left:694px;top:650px">中部</div>
<div class="l12" style="left:771px;top:650px">下部</div>
<div class="l12" style="left:542px;top:673px">最高温度</div>
<div class="l12" style="left:542px;top:709px">平均温度</div>
<div class="tb" style="left:594px;top:670px">975</div>
<div class="tb" style="left:672px;top:670px">968</div>
<div class="tb" style="left:749px;top:670px">1015</div>
<div class="tb" style="left:594px;top:706px">880</div>
<div class="tb" style="left:672px;top:706px">905</div>
<div class="tb" style="left:749px;top:706px">952</div>
<div class="l12" style="left:642px;top:738px;letter-spacing:12px">焦饼左侧温度</div>
<div class="l12" style="left:936px;top:650px">上部</div>
<div class="l12" style="left:1011px;top:650px">中部</div>
<div class="l12" style="left:1086px;top:650px">下部</div>
<div class="tb" style="left:915px;top:670px">926</div>
<div class="tb" style="left:989px;top:670px">1007</div>
<div class="tb" style="left:1064px;top:670px">1064</div>
<div class="tb" style="left:915px;top:706px">856</div>
<div class="tb" style="left:989px;top:706px">927</div>
<div class="tb" style="left:1064px;top:706px">965</div>
<div class="l12" style="left:977px;top:738px;letter-spacing:12px">焦饼右侧温度</div>
<div id="botline"></div>


</body></html>
